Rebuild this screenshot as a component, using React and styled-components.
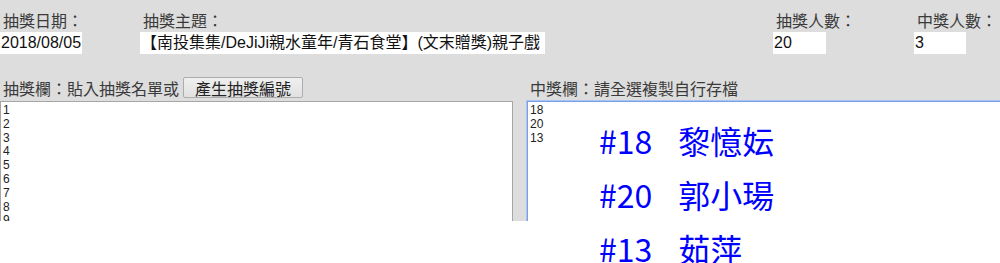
import React from "react";
import styled, { createGlobalStyle } from "styled-components";

const Global = createGlobalStyle`
  html, body { margin: 0; padding: 0; background: #ffffff; }
  body { font-family: "Liberation Sans", "Noto Sans CJK TC", Arial, sans-serif; }
`;

const Page = styled.div`
  position: relative;
  width: 1000px;
  height: 263px;
  overflow: hidden;
`;

const Panel = styled.div`
  background: #dddddd;
  height: 221px;
  overflow: hidden;
  display: flex;
  flex-direction: column;
`;

const Header = styled.div`
  display: grid;
  grid-template-columns: 140px 633px 141px 86px;
  padding-top: 10px;
`;

const Field = styled.div`
  display: flex;
  flex-direction: column;
  gap: 2px;
`;

const Label = styled.span`
  font-family: "Noto Sans CJK TC", sans-serif;
  font-size: 16px;
  line-height: 20px;
  color: #3a3a3a;
  padding-left: 3px;
  white-space: nowrap;
`;

const TextInput = styled.div`
  box-sizing: border-box;
  width: ${(p) => p.$w}px;
  height: 22px;
  background: #ffffff;
  font-family: "Liberation Sans", "Noto Sans CJK TC", sans-serif;
  font-size: 16px;
  line-height: 22px;
  color: #111;
  padding-left: 1px;
  white-space: nowrap;
  overflow: hidden;
`;

const Toolbar = styled.div`
  display: grid;
  grid-template-columns: 513px 1fr;
  column-gap: 14px;
  margin-top: 23px;
  height: 25px;
  align-items: center;
`;

const ToolGroup = styled.div`
  display: flex;
  align-items: center;
  gap: 4px;
`;

const Button = styled.button`
  font-family: "Noto Sans CJK TC", sans-serif;
  font-size: 16px;
  line-height: 18px;
  height: 21px;
  padding: 0 11px;
  margin: 0;
  background: linear-gradient(#efefef, #e1e1e1);
  border: 1px solid #adadad;
  border-radius: 2px;
  color: #222;
`;

const Areas = styled.div`
  display: grid;
  grid-template-columns: 513px 1fr;
  column-gap: 14px;
  margin-top: 3px;
  flex: 1;
`;

const Area = styled.div`
  box-sizing: border-box;
  background: #ffffff;
  height: 160px;
  border: 1px solid ${(p) => (p.$focus ? "#7aa0e6" : "#a6a6a6")};
  box-shadow: ${(p) => (p.$focus ? "0 0 0 1px #a9c2f0" : "none")};
  padding: 2px 2px;
  font-family: "Liberation Sans", sans-serif;
  font-size: 12px;
  line-height: 13.8px;
  color: #222;
  margin-right: ${(p) => (p.$focus ? "-10px" : "0")};
`;

const Line = styled.div``;

const Winners = styled.div`
  position: absolute;
  left: 599px;
  top: 113px;
  display: flex;
  flex-direction: column;
  color: #0000ff;
  font-family: "Noto Sans CJK TC", sans-serif;
  font-size: 32px;
  line-height: 54px;
`;

const Winner = styled.div`
  display: flex;
  gap: 26px;
  white-space: nowrap;
`;

const entries = Array.from({ length: 9 }, (_, i) => String(i + 1));
const winners = [
  ["#18", "黎憶妘"],
  ["#20", "郭小瑒"],
  ["#13", "茹萍"],
];

export default function App() {
  return (
    <>
      <Global />
      <Page>
        <Panel>
          <Header>
            <Field>
              <Label>抽獎日期：</Label>
              <TextInput $w={82}>2018/08/05</TextInput>
            </Field>
            <Field>
              <Label>抽獎主題：</Label>
              <TextInput $w={405}>【南投集集/DeJiJi親水童年/青石食堂】(文末贈獎)親子戲</TextInput>
            </Field>
            <Field>
              <Label>抽獎人數：</Label>
              <TextInput $w={53}>20</TextInput>
            </Field>
            <Field>
              <Label>中獎人數：</Label>
              <TextInput $w={52}>3</TextInput>
            </Field>
          </Header>
          <Toolbar>
            <ToolGroup>
              <Label>抽獎欄：貼入抽獎名單或</Label>
              <Button>產生抽獎編號</Button>
            </ToolGroup>
            <ToolGroup>
              <Label>中獎欄：請全選複製自行存檔</Label>
            </ToolGroup>
          </Toolbar>
          <Areas>
            <Area>
              {entries.map((n) => (
                <Line key={n}>{n}</Line>
              ))}
            </Area>
            <Area $focus>
              {winners.map(([n]) => (
                <Line key={n}>{n.slice(1)}</Line>
              ))}
            </Area>
          </Areas>
        </Panel>
        <Winners>
          {winners.map(([n, name]) => (
            <Winner key={n}>
              <span>{n}</span>
              <span>{name}</span>
            </Winner>
          ))}
        </Winners>
      </Page>
    </>
  );
}
